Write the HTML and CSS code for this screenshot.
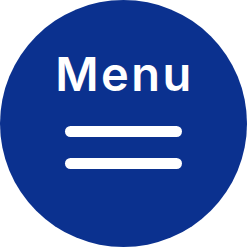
FILE: index.html
```html
<!DOCTYPE html>
<html>
<head>
<meta charset="utf-8">
<link rel="stylesheet" href="styles.css">
</head>
<body>
<div class="menu-button">
  <span class="label">Menu</span>
  <div class="bars">
    <span class="bar"></span>
    <span class="bar"></span>
  </div>
</div>
</body>
</html>
```
FILE: styles.css
```css
html, body {
  margin: 0;
  padding: 0;
  background: #ffffff;
}
.menu-button {
  width: 247px;
  height: 247px;
  border-radius: 50%;
  background: #0b318f;
  display: flex;
  flex-direction: column;
  align-items: center;
  box-sizing: border-box;
  padding-top: 48px;
}
.label {
  font-family: Inter, "Noto Sans", sans-serif;
  font-weight: 600;
  font-size: 47px;
  line-height: 52px;
  color: #ffffff;
  letter-spacing: 2.5px;
  padding-left: 2px;
}
.bars {
  display: flex;
  flex-direction: column;
  gap: 21px;
  margin-top: 26px;
}
.bar {
  display: block;
  width: 117px;
  height: 11px;
  border-radius: 6px;
  background: #ffffff;
}
```
